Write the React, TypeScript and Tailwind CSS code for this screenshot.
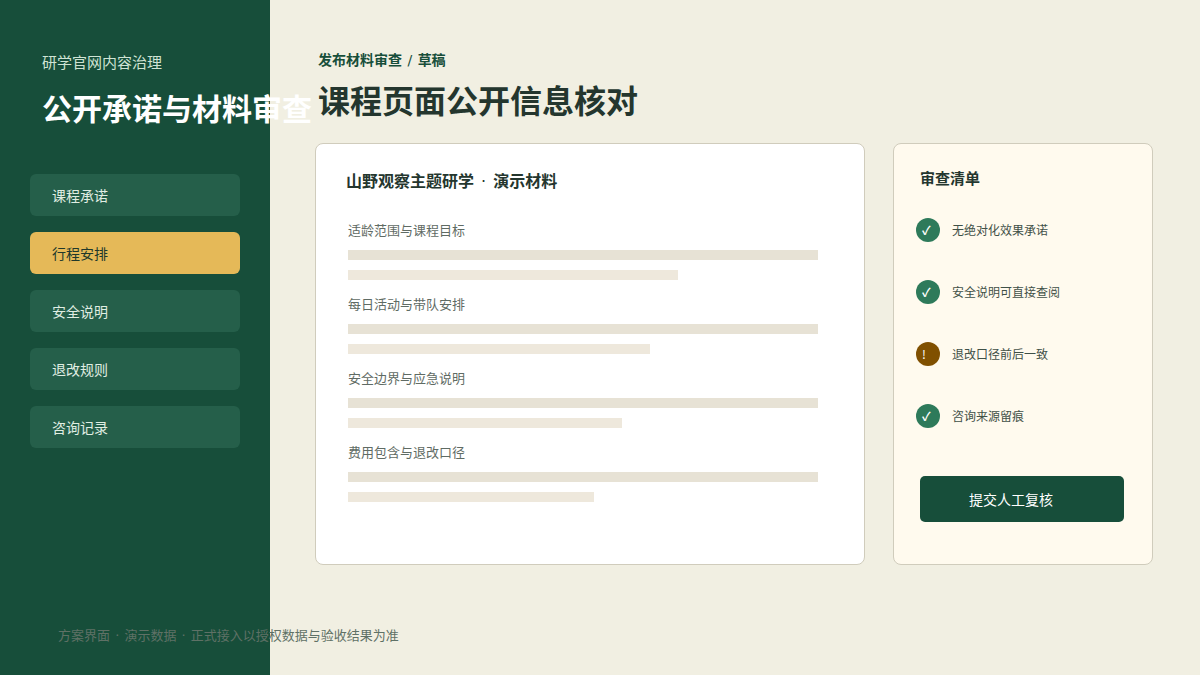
import React from 'react';
import clsx from 'clsx';

const NAV_ITEMS = ['课程承诺', '行程安排', '安全说明', '退改规则', '咨询记录'];
const ACTIVE_ITEM = '行程安排';

const SECTIONS = [
  { title: '适龄范围与课程目标', fill: 330 / 470 },
  { title: '每日活动与带队安排', fill: 302 / 470 },
  { title: '安全边界与应急说明', fill: 274 / 470 },
  { title: '费用包含与退改口径', fill: 246 / 470 }
];

const CHECKS = [
  { label: '无绝对化效果承诺', ok: true },
  { label: '安全说明可直接查阅', ok: true },
  { label: '退改口径前后一致', ok: false },
  { label: '咨询来源留痕', ok: true }
];

function Separator({ char, className = 'mx-px' }: { char: string; className?: string }) {
  return (
    <span className={clsx("font-['DejaVu_Sans',sans-serif] font-normal", className)}>
      {` ${char} `}
    </span>
  );
}

function Sidebar() {
  return (
    <aside className="w-[270px] shrink-0 bg-[#174e3a] px-[30px] pt-[50px]">
      <div className="pl-3 whitespace-nowrap">
        <p className="text-[15px] leading-6 text-[#cfe3d4]">研学官网内容治理</p>
        <h1 className="mt-3 text-[30px] leading-[42px] font-bold text-white">
          公开承诺与材料审查
        </h1>
      </div>
      <nav className="mt-[46px] flex flex-col gap-4">
        {NAV_ITEMS.map((item) => (
          <a
            key={item}
            href="#"
            className={clsx(
              'flex h-[42px] items-center rounded-md px-[22px] text-sm',
              item === ACTIVE_ITEM
                ? 'bg-[#e5b958] text-[#20382b]'
                : 'bg-[#255f4a] text-[#e0eee3]'
            )}
          >
            {item}
          </a>
        ))}
      </nav>
    </aside>
  );
}

function MaterialCard() {
  return (
    <section className="flex-1 rounded-lg border border-[#d0ccbc] bg-white pt-6 pr-[46px] pb-[62px] pl-8">
      <h3 className="-ml-0.5 text-base leading-6 font-bold text-[#24362e]">
        山野观察主题研学
        <Separator char="·" className="mx-0.5" />
        演示材料
      </h3>
      <div className="mt-[26px] flex flex-col gap-3.5">
        {SECTIONS.map((section) => (
          <div key={section.title}>
            <h4 className="text-[13px] leading-5 text-[#5f6b64]">{section.title}</h4>
            <div className="mt-2.5 h-2.5 bg-[#e7e2d5]" />
            <div
              className="mt-2.5 h-2.5 bg-[#eee8dc]"
              style={{ width: `${section.fill * 100}%` }}
            />
          </div>
        ))}
      </div>
    </section>
  );
}

function ReviewCard() {
  return (
    <section className="w-[260px] shrink-0 rounded-lg border border-[#d0ccbc] bg-[#fffaee] pt-[22px] pr-7 pl-[22px]">
      <h3 className="pl-1 text-[15px] leading-6 font-bold text-[#24362e]">审查清单</h3>
      <ul className="mt-7 flex flex-col gap-[38px]">
        {CHECKS.map((check) => (
          <li key={check.label} className="flex items-center gap-3">
            <span
              className={clsx(
                'flex size-6 items-center rounded-full pl-1.5 text-xs text-white',
                check.ok ? 'bg-[#2e7a5a] font-bold' : 'bg-[#805000]'
              )}
            >
              {check.ok ? '✓' : '!'}
            </span>
            <span className="text-xs text-[#3f5047]">{check.label}</span>
          </li>
        ))}
      </ul>
      <div className="mt-12 pl-1">
        <button
          type="button"
          className="h-[46px] w-full rounded-[5px] bg-[#174e3a] pr-[22px] text-sm text-white"
        >
          提交人工复核
        </button>
      </div>
    </section>
  );
}

export default function App() {
  return (
    <div className="relative flex min-h-screen bg-[#f1efe2] font-['Noto_Sans_CJK_SC',sans-serif]">
      <Sidebar />
      <main className="flex-1 pt-[47px] pr-[47px] pb-[100px] pl-[45px]">
        <header className="pl-[3px]">
          <p className="text-sm leading-6 font-bold text-[#174e3a]">
            发布材料审查
            <Separator char="/" />
            草稿
          </p>
          <h2 className="mt-1 text-[32px] leading-[46px] font-bold text-[#24362e]">
            课程页面公开信息核对
          </h2>
        </header>
        <div className="mt-[21px] flex gap-7">
          <MaterialCard />
          <ReviewCard />
        </div>
      </main>
      <footer className="absolute bottom-[29px] left-[58px] text-[13px] leading-5 text-[#5f7166]">
        方案界面
        <Separator char="·" />
        演示数据
        <Separator char="·" />
        正式接入以授权数据与验收结果为准
      </footer>
    </div>
  );
}
